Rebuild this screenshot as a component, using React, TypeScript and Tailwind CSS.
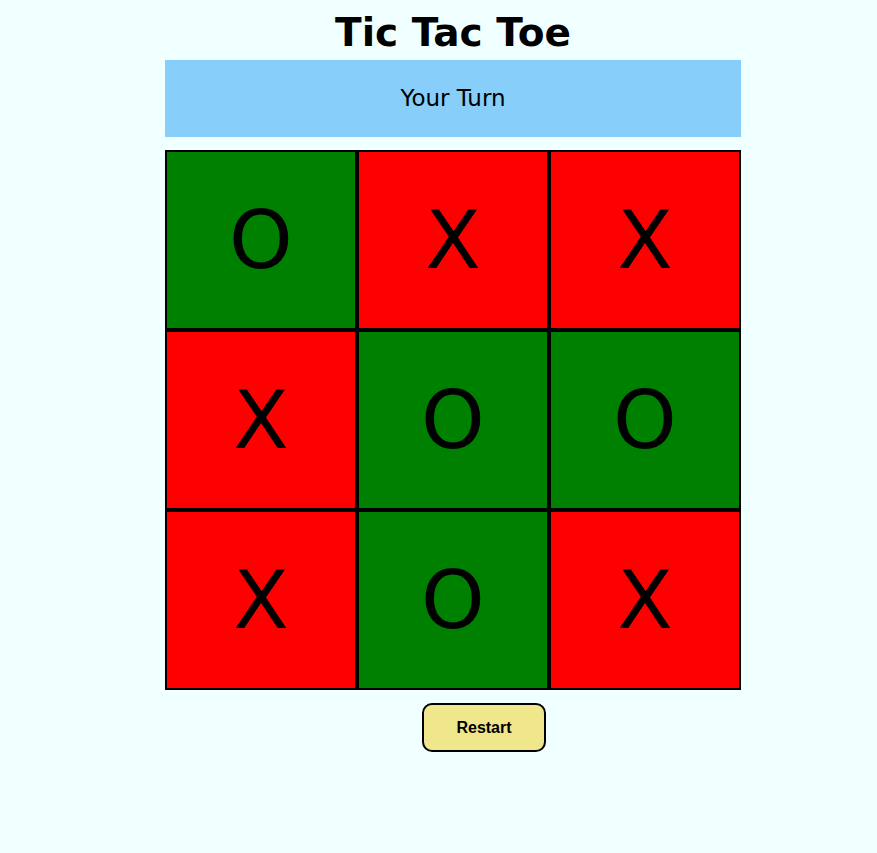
import React, {useState} from 'react';

const initial = ['O', 'X', 'X', 'X', 'O', 'O', 'X', 'O', 'X'];

const App: React.FC = () => {
  const [board, setBoard] = useState<string[]>(initial);

  return (
    <div className="min-h-[853px] bg-[#f0ffff] font-['DejaVu_Sans',sans-serif] text-black">
      <div className="ml-[165px] w-[576px] pt-[10px]">
        <h1 className="text-center text-[39px] font-bold leading-[46px] mb-[4px]">Tic Tac Toe</h1>

        <div className="h-[77px] bg-[#87cefa] flex items-center justify-center text-[23px]">
          Your Turn
        </div>

        <div className="mt-[13px] grid grid-cols-3">
          {board.map((cell, i) => (
            <div
              key={i}
              className={
                'h-[180px] border-2 border-black flex items-center justify-center text-[81px] leading-none ' +
                (cell === 'X' ? 'bg-[#ff0000]' : 'bg-[#008000]')
              }
            >
              {cell}
            </div>
          ))}
        </div>

        <button
          onClick={() => setBoard(Array(9).fill(''))}
          className="mt-[13px] ml-[257px] w-[124px] h-[49px] rounded-[10px] border-2 border-black bg-[#f0e68c] font-['Liberation_Sans',sans-serif] font-bold text-[16px]"
        >
          Restart
        </button>
      </div>
    </div>
  );
};

export default App;
